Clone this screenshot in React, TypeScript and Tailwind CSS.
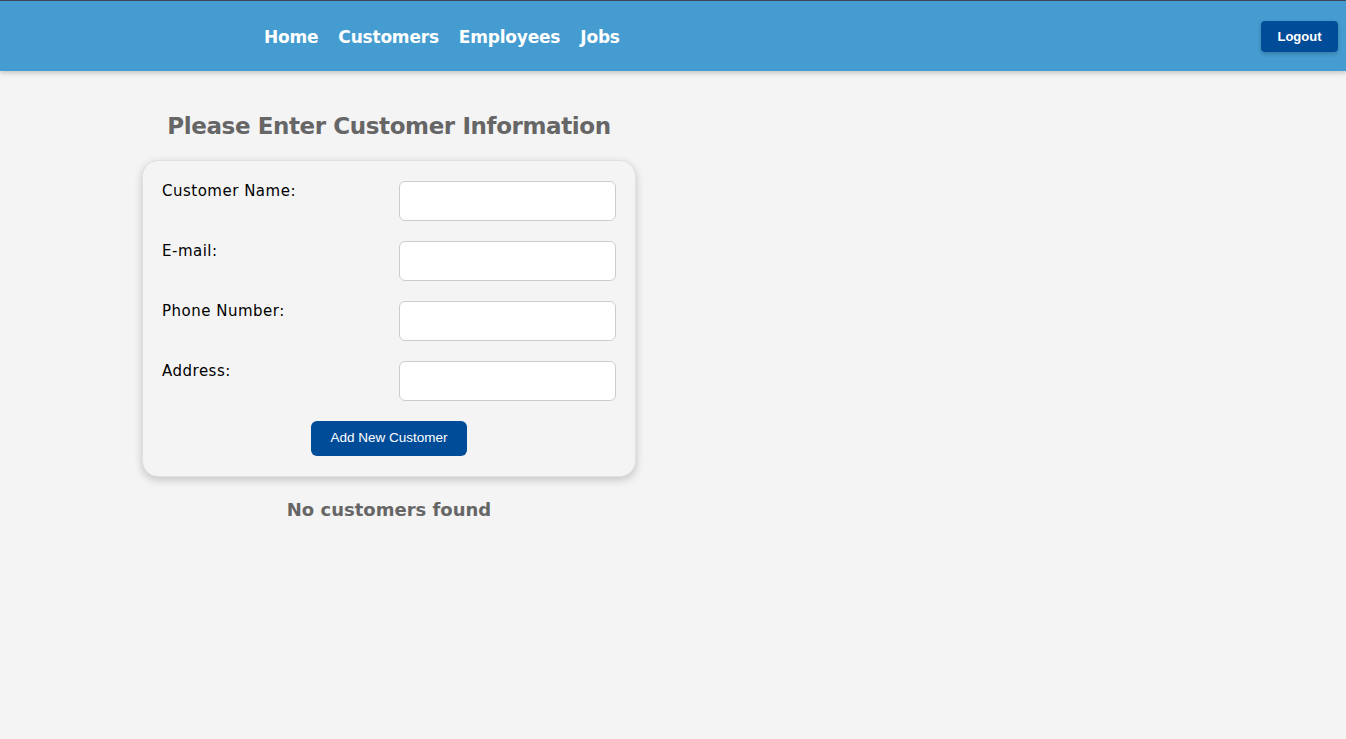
import { useState } from "react";

const NAV = ["Home", "Customers", "Employees", "Jobs"];
const FIELDS = ["Customer Name:", "E-mail:", "Phone Number:", "Address:"];

const mont = { fontFamily: '"DejaVu Sans", "Open Sans", sans-serif' };

export default function App() {
  const [values, setValues] = useState<string[]>(["", "", "", ""]);

  return (
    <div className="min-h-screen bg-[#f4f4f4]" style={mont}>
      {/* header */}
      <header className="flex h-[71px] items-center justify-between border-t border-[#3d4a55] bg-[#459cd0] pl-[264px] pr-[8px] shadow-[0_2px_5px_rgba(0,0,0,0.2)]">
        <nav className="flex gap-[20px] pt-[3px] text-[17px] font-bold tracking-[-0.2px] text-white">
          {NAV.map((n) => (
            <a key={n} href="#">
              {n}
            </a>
          ))}
        </nav>
        <button
          className="h-[31px] w-[77px] rounded-[4px] bg-[#004c99] pt-[1px] text-[13px] font-bold text-white shadow-[0_2px_4px_rgba(0,0,0,0.2)]"
          style={{ fontFamily: '"Liberation Sans", Arial, sans-serif' }}
        >
          Logout
        </button>
      </header>

      {/* main */}
      <main className="ml-[142px] w-[494px] pt-[40px]">
        <h1 className="text-center text-[23px] font-bold leading-[30px] tracking-[-0.4px] text-[#666]">
          Please Enter Customer Information
        </h1>

        <form
          className="mt-[19px] flex flex-col rounded-[16px] border border-[#e0e0e0] bg-[#f4f4f4] px-[19px] pb-[20px] pt-[20px] shadow-[0_3px_8px_rgba(0,0,0,0.2)]"
          onSubmit={(e) => e.preventDefault()}
        >
          {FIELDS.map((f, i) => (
            <div key={f} className="mb-[20px] flex items-start justify-between">
              <label className="pt-[1px] text-[15px] leading-[18px] tracking-[0.5px] text-black">{f}</label>
              <input
                className="h-[40px] w-[217px] rounded-[6px] border border-[#ccc] bg-white px-2 text-[14px] outline-none"
                value={values[i]}
                onChange={(e) => {
                  const next = [...values];
                  next[i] = e.target.value;
                  setValues(next);
                }}
              />
            </div>
          ))}
          <div className="flex justify-center">
            <button
              type="submit"
              className="h-[35px] w-[156px] rounded-[6px] bg-[#004c99] text-[13.5px] text-white"
              style={{ fontFamily: '"Liberation Sans", Arial, sans-serif' }}
            >
              Add New Customer
            </button>
          </div>
        </form>

        <p className="mt-[19px] text-center text-[18px] font-bold text-[#666]">
          No customers found
        </p>
      </main>
    </div>
  );
}
